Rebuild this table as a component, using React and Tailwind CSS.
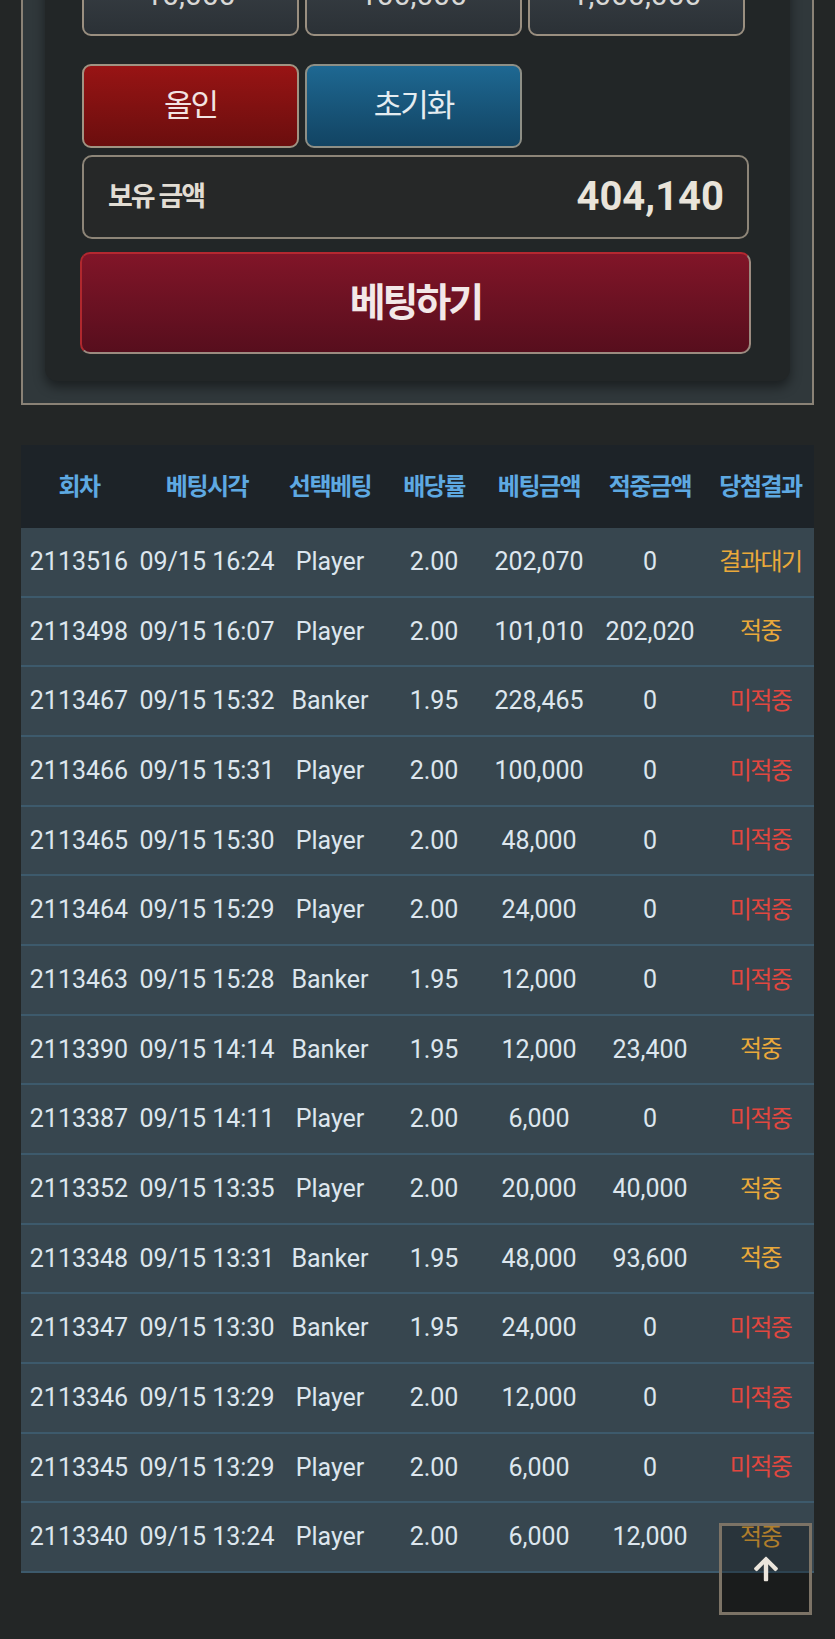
import React from "react";
import { FaArrowUp } from "react-icons/fa";

const rows = [
  ["2113516", "09/15 16:24", "Player", "2.00", "202,070", "0", "결과대기"],
  ["2113498", "09/15 16:07", "Player", "2.00", "101,010", "202,020", "적중"],
  ["2113467", "09/15 15:32", "Banker", "1.95", "228,465", "0", "미적중"],
  ["2113466", "09/15 15:31", "Player", "2.00", "100,000", "0", "미적중"],
  ["2113465", "09/15 15:30", "Player", "2.00", "48,000", "0", "미적중"],
  ["2113464", "09/15 15:29", "Player", "2.00", "24,000", "0", "미적중"],
  ["2113463", "09/15 15:28", "Banker", "1.95", "12,000", "0", "미적중"],
  ["2113390", "09/15 14:14", "Banker", "1.95", "12,000", "23,400", "적중"],
  ["2113387", "09/15 14:11", "Player", "2.00", "6,000", "0", "미적중"],
  ["2113352", "09/15 13:35", "Player", "2.00", "20,000", "40,000", "적중"],
  ["2113348", "09/15 13:31", "Banker", "1.95", "48,000", "93,600", "적중"],
  ["2113347", "09/15 13:30", "Banker", "1.95", "24,000", "0", "미적중"],
  ["2113346", "09/15 13:29", "Player", "2.00", "12,000", "0", "미적중"],
  ["2113345", "09/15 13:29", "Player", "2.00", "6,000", "0", "미적중"],
  ["2113340", "09/15 13:24", "Player", "2.00", "6,000", "12,000", "적중"],
];

const headers = ["회차", "베팅시각", "선택베팅", "배당률", "베팅금액", "적중금액", "당첨결과"];

const cols = "grid grid-cols-[116px_140px_106px_102px_108px_114px_107px]";

const App = () => {
  return (
    <div className="min-h-[1639px] bg-[#232626] font-['Roboto','Noto_Sans_CJK_KR',sans-serif] overflow-hidden">
      {/* Bet panel (scrolled) */}
      <div className="mx-[21px] -mt-[109px] border-2 border-[#8a8276] bg-[#30383b] p-[22px]">
        <div className="rounded-xl bg-[#222627] pl-[37px] pr-[41px] pt-[37px] pb-[27px] shadow-[0_6px_12px_rgba(0,0,0,0.45)]">
          {/* Chips */}
          <div className="flex gap-[6px]">
            {["10,000", "100,000", "1,000,000"].map((c) => (
              <button
                key={c}
                className="h-[84px] w-[217px] rounded-[9px] border-2 border-[#9a8f80] bg-gradient-to-b from-[#3d444a] to-[#2b3136] text-[30px] text-[#d8d8d6]"
              >
                {c}
              </button>
            ))}
          </div>

          {/* All-in / reset */}
          <div className="mt-[28px] flex gap-[6px]">
            <button className="h-[84px] w-[217px] rounded-[9px] border-2 border-[#a09483] bg-gradient-to-b from-[#981414] to-[#6b0e0e] text-[31px] tracking-[-2px] text-[#f2e4e2]">
              올인
            </button>
            <button className="h-[84px] w-[217px] rounded-[9px] border-2 border-[#8e8f86] bg-gradient-to-b from-[#1e6892] to-[#124463] text-[31px] tracking-[-2px] text-[#e4ecf0]">
              초기화
            </button>
          </div>

          {/* Balance */}
          <div className="mt-[7px] flex h-[84px] items-center justify-between rounded-[10px] border-2 border-[#8d8578] bg-[#262828] pl-[24px] pr-[23px]">
            <span className="text-[27px] font-bold tracking-[-2px] text-[#e2ddd4]">보유 금액</span>
            <span className="text-[40px] font-bold text-[#e9e4da]">404,140</span>
          </div>

          {/* Bet button */}
          <button className="-ml-[2px] mt-[13px] h-[102px] w-[671px] rounded-[10px] border-2 border-[#9c8b80] border-t-[#b52830] border-l-[#b0282e] bg-gradient-to-b from-[#811528] to-[#570e1d] text-[39px] font-bold tracking-[-3px] text-[#f3e8e8]">
            베팅하기
          </button>
        </div>
      </div>

      {/* History table */}
      <div className="mx-[21px] mt-[40px] w-[793px]">
        <div className={`${cols} h-[83px] items-center bg-[#1d2328] text-center text-[24px] font-bold tracking-[-1.5px] text-[#5ea9e2]`}>
          {headers.map((h) => (
            <div key={h} className="whitespace-nowrap">{h}</div>
          ))}
        </div>
        {rows.map((r) => (
          <div
            key={r[0]}
            className={`${cols} h-[69.67px] items-center border-b-2 border-[#3d5a6c] bg-[#37464f] text-center text-[25px] text-[#dde6ee]`}
          >
            {r.slice(0, 6).map((v, i) => (
              <div key={i} className="whitespace-nowrap">{v}</div>
            ))}
            <div
              className={`whitespace-nowrap text-[24px] tracking-[-1.5px] ${
                r[6] === "미적중" ? "text-[#e2473f]" : "text-[#eaa93a]"
              }`}
            >
              {r[6]}
            </div>
          </div>
        ))}
      </div>

      {/* Scroll to top */}
      <button className="fixed bottom-[24px] right-[23px] flex h-[92px] w-[93px] items-center justify-center border-[3px] border-[#7c7366] bg-black/25 text-[#ebe5dc]">
        <FaArrowUp size={28} />
      </button>
    </div>
  );
};

export default App;
